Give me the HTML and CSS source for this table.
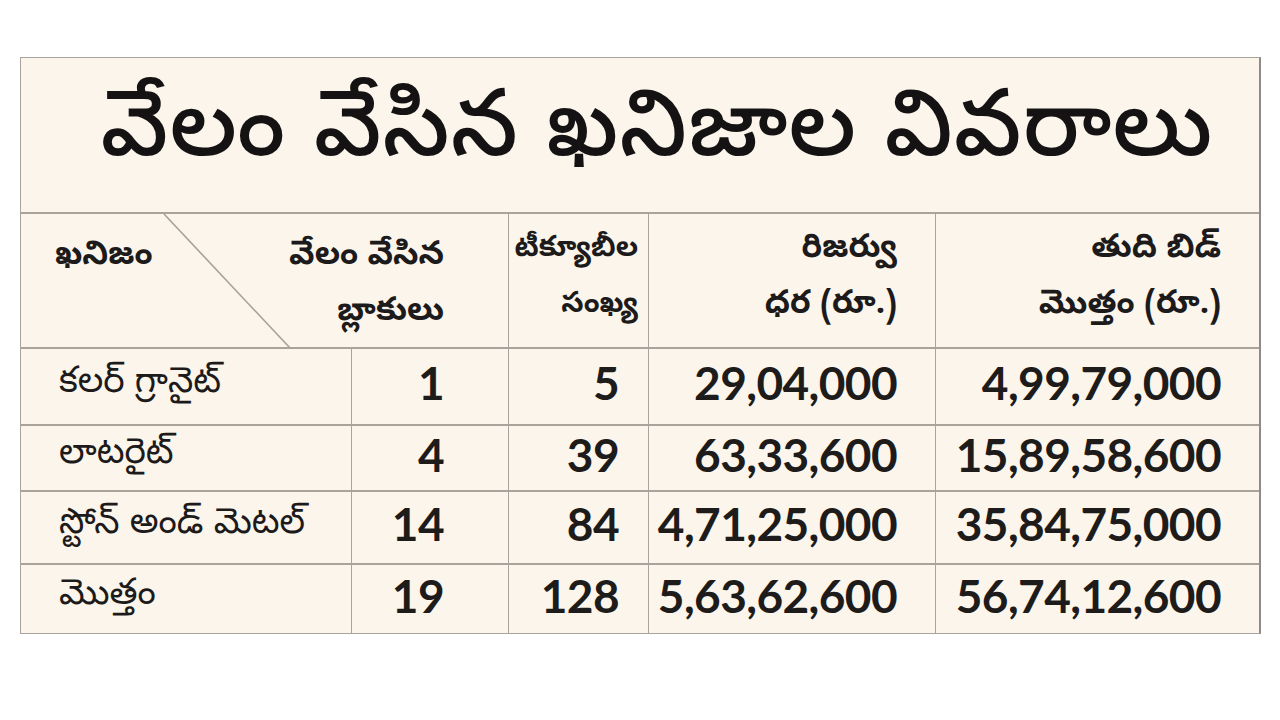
FILE: index.html
```html
<!DOCTYPE html>
<html lang="te">
<head>
<meta charset="utf-8">
<title>వేలం వేసిన ఖనిజాల వివరాలు</title>
<link rel="stylesheet" href="styles.css">
</head>
<body>
<div class="box">
  <div class="title">వేలం వేసిన ఖనిజాల వివరాలు</div>
  <div class="grid">
    <div class="cell head head-first">
      <svg class="diag" width="489" height="135" viewBox="0 0 489 135" aria-hidden="true"><line x1="143" y1="0" x2="270" y2="135" stroke="#a9a29a" stroke-width="1.6"/></svg>
      <span class="h-left">ఖనిజం</span>
      <span class="h-right">వేలం వేసిన<br>బ్లాకులు</span>
    </div>
    <div class="cell head num-c3 narrow">టీక్యూబీల<br>సంఖ్య</div>
    <div class="cell head num-c4">రిజర్వు<br>ధర (రూ.)</div>
    <div class="cell head num-c5 last">తుది బిడ్<br>మొత్తం (రూ.)</div>

    <div class="cell name r1">కలర్ గ్రానైట్</div>
    <div class="cell num num-c2 r1">1</div>
    <div class="cell num num-c3 r1">5</div>
    <div class="cell num num-c4 r1">29,04,000</div>
    <div class="cell num num-c5 last r1">4,99,79,000</div>

    <div class="cell name r2">లాటరైట్</div>
    <div class="cell num num-c2 r2">4</div>
    <div class="cell num num-c3 r2">39</div>
    <div class="cell num num-c4 r2">63,33,600</div>
    <div class="cell num num-c5 last r2">15,89,58,600</div>

    <div class="cell name r3">స్టోన్ అండ్ మెటల్</div>
    <div class="cell num num-c2 r3">14</div>
    <div class="cell num num-c3 r3">84</div>
    <div class="cell num num-c4 r3">4,71,25,000</div>
    <div class="cell num num-c5 last r3">35,84,75,000</div>

    <div class="cell name r4">మొత్తం</div>
    <div class="cell num num-c2 r4">19</div>
    <div class="cell num num-c3 r4">128</div>
    <div class="cell num num-c4 r4">5,63,62,600</div>
    <div class="cell num num-c5 last r4">56,74,12,600</div>
  </div>
</div>
</body>
</html>
```
FILE: styles.css
```css
html, body {
  margin: 0;
  padding: 0;
  background: #ffffff;
}
body {
  font-family: "Noto Sans Telugu", "Noto Serif Telugu", "Lohit Telugu", "Mandali", "Ramabhadra", "Gurajada", "Pothana2000", "Vemana2000", "Noto Sans", sans-serif;
  color: #1c1a1a;
}
.box {
  margin: 57px 0 0 20px;
  width: 1238px;
  background: #fbf5eb;
  border: 1.5px solid #a8a39d;
  border-right: 2px solid #8e8a88;
}
.title {
  height: 154px;
  display: flex;
  align-items: center;
  justify-content: center;
  padding-left: 34px;
  padding-top: 4px;
  box-sizing: border-box;
  font-size: 93px;
  font-weight: 500;
  color: #141212;
  letter-spacing: 1px;
}
.grid {
  display: grid;
  grid-template-columns: 331px 157px 140px 287px 1fr;
  grid-template-rows: 135px 77px 66px 73px 70px;
}
.cell {
  border-top: 2px solid #a9a39c;
  border-right: 1.5px solid #a9a39c;
  display: flex;
  align-items: center;
  box-sizing: border-box;
}
.cell.last {
  border-right: none;
}
.head {
  font-weight: 700;
  font-size: 33px;
  line-height: 56px;
  justify-content: flex-end;
  text-align: right;
  padding-bottom: 4px;
}
.head.narrow {
  font-size: 29px;
}
.head-first {
  grid-column: span 2;
  position: relative;
  justify-content: space-between;
  align-items: flex-start;
  padding: 16px 64px 0 34px;
}
.diag {
  position: absolute;
  left: 0;
  top: 0;
}
.h-right {
  text-align: right;
}
.name {
  font-size: 36px;
  padding-left: 38px;
  font-weight: 400;
  padding-bottom: 4px;
}
.num {
  font-family: "Lato", "Liberation Sans", sans-serif;
  font-weight: 700;
  font-size: 46px;
  letter-spacing: -0.6px;
  justify-content: flex-end;
  color: #1e1b1b;
  padding-bottom: 8px;
}
.num-c2 { padding-right: 64px; }
.head.num-c3, .num.num-c3 { padding-right: 29px; }
.head.num-c3.narrow { padding-right: 10px; }
.head.num-c4, .num.num-c4 { padding-right: 38px; }
.head.num-c5, .num.num-c5 { padding-right: 38px; }
```
